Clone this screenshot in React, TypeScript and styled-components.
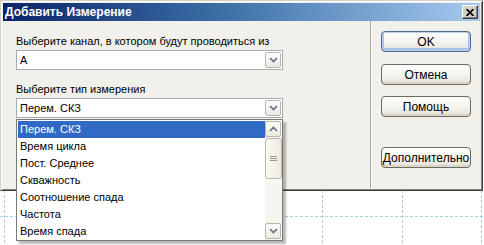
import styled, { createGlobalStyle } from 'styled-components';

const GlobalStyle = createGlobalStyle`
  body {
    margin: 0;
    background: #ffffff;
    font-family: Tahoma, 'Liberation Sans', 'DejaVu Sans', sans-serif;
  }
`;

const ui = {
  face: '#f2f0ea',
  frame: '#d4d0c8',
  field: '#a3abb6',
  select: '#316ac5',
  grid: '#a9cfdc',
};

const Stage = styled.div`
  position: relative;
  width: 484px;
  height: 245px;
  overflow: hidden;
  background: #ffffff;
`;

const Backdrop = styled.svg`
  position: absolute;
  inset: 0;
`;

const Window = styled.div`
  position: relative;
  width: 483px;
  height: 191px;
  box-sizing: border-box;
  display: flex;
  flex-direction: column;
  background: ${ui.face};
  border: 1px solid;
  border-color: ${ui.frame} #404040 #404040 ${ui.frame};
  box-shadow: inset 1px 1px 0 #ffffff, inset -1px -1px 0 #808080;
  padding: 2px;
`;

const TitleBar = styled.div`
  height: 18px;
  display: flex;
  align-items: center;
  padding: 0 2px 0 2px;
  background: linear-gradient(to right, #0a246a 0%, #3a6ea5 45%, #a6caf0 100%);
  color: #ffffff;
  font-size: 12px;
  font-weight: bold;
  font-family: Tahoma, 'Liberation Sans', sans-serif;
`;

const Title = styled.span`
  flex: 1;
`;

const CloseButton = styled.div`
  width: 16px;
  height: 14px;
  box-sizing: border-box;
  display: flex;
  align-items: center;
  justify-content: center;
  background: ${ui.frame};
  border: 1px solid;
  border-color: #ffffff #404040 #404040 #ffffff;
  box-shadow: inset -1px -1px 0 #808080;
`;

const Body = styled.div`
  flex: 1;
  display: flex;
`;

const LeftPane = styled.div`
  width: 367px;
  box-sizing: border-box;
  padding: 14px 0 0 13px;
  display: flex;
  flex-direction: column;
`;

const Divider = styled.div`
  width: 0;
  border-left: 1px solid #aca899;
  border-right: 1px solid #ffffff;
`;

const RightPane = styled.div`
  flex: 1;
  display: flex;
  flex-direction: column;
  align-items: center;
  padding-top: 10px;
`;

const Label = styled.div<{ $gap?: number }>`
  margin-top: ${(p) => p.$gap ?? 0}px;
  height: 13px;
  line-height: 13px;
  font-size: 11px;
  color: #000000;
  margin-bottom: 2px;
  white-space: nowrap;
`;

const Combo = styled.div`
  position: relative;
  width: 267px;
  height: 20px;
  box-sizing: border-box;
  border: 1px solid ${ui.field};
  background: #ffffff;
  display: flex;
  align-items: center;
  padding: 0 1px 0 3px;
  font-size: 11px;
`;

const ComboText = styled.span`
  flex: 1;
`;

const ArrowButton = styled.div<{ $h?: number }>`
  width: 16px;
  height: ${(p) => p.$h ?? 16}px;
  box-sizing: border-box;
  display: flex;
  align-items: center;
  justify-content: center;
  border: 1px solid #b9b6ab;
  border-radius: 2px;
  background: linear-gradient(to bottom, #fdfdfb, #ebe8de);
`;

const Popup = styled.div`
  position: absolute;
  left: -1px;
  top: 20px;
  width: 267px;
  box-sizing: border-box;
  border: 1px solid #7a7a7a;
  background: #ffffff;
  display: flex;
  box-shadow: 3px 3px 2px rgba(0, 0, 0, 0.28);
  z-index: 2;
`;

const Items = styled.div`
  flex: 1;
  display: flex;
  flex-direction: column;
  padding: 1px 0 0 1px;
`;

const Item = styled.div<{ $active?: boolean }>`
  height: 17px;
  line-height: 17px;
  padding-left: 2px;
  font-size: 11px;
  background: ${(p) => (p.$active ? ui.select : 'transparent')};
  color: ${(p) => (p.$active ? '#ffffff' : '#000000')};
`;

const ScrollBar = styled.div`
  width: 17px;
  display: flex;
  flex-direction: column;
  background: #f6f5f0;
  padding: 1px 0;
`;

const Track = styled.div`
  flex: 1;
  display: flex;
  flex-direction: column;
`;

const Thumb = styled.div`
  height: 41px;
  margin: 1px 0;
  box-sizing: border-box;
  border: 1px solid #b9b6ab;
  border-radius: 3px;
  background: linear-gradient(to right, #fbfaf6, #ece9df);
  display: flex;
  align-items: center;
  justify-content: center;
`;

const Button = styled.div<{ $primary?: boolean; $gap?: number }>`
  width: 90px;
  height: 21px;
  box-sizing: border-box;
  margin-top: ${(p) => p.$gap ?? 0}px;
  display: flex;
  align-items: center;
  justify-content: center;
  font-size: 12px;
  color: #000000;
  border: 1px solid ${(p) => (p.$primary ? '#4d6a93' : '#6d6a60')};
  border-radius: 4px;
  background: linear-gradient(to bottom, #ffffff 0%, #f4f3ee 55%, #e4e1d6 100%);
  box-shadow: ${(p) =>
    p.$primary ? 'inset 0 0 0 1px #bcd0ec, inset 0 -1px 0 2px #a9c1e6' : 'inset 0 -2px 0 #d8d4c6'};
`;

const Chevron = ({ up }: { up?: boolean }) => (
  <svg width="9" height="6" viewBox="0 0 9 6">
    <path
      d={up ? 'M1 5 L4.5 1.5 L8 5' : 'M1 1 L4.5 4.5 L8 1'}
      fill="none"
      stroke="#5d6d8a"
      strokeWidth="1.6"
    />
  </svg>
);

const Grip = () => (
  <svg width="7" height="6" viewBox="0 0 7 6">
    <path d="M0 0.5 H7 M0 2.5 H7 M0 4.5 H7" stroke="#9a978c" strokeWidth="1" />
  </svg>
);

const CloseIcon = () => (
  <svg width="8" height="7" viewBox="0 0 8 7">
    <path d="M0.5 0 L7.5 7 M7.5 0 L0.5 7" stroke="#000000" strokeWidth="1.7" />
  </svg>
);

const items = [
  'Перем. СКЗ',
  'Время цикла',
  'Пост. Среднее',
  'Скважность',
  'Соотношение спада',
  'Частота',
  'Время спада',
];

const App: React.FC = () => {
  return (
    <Stage>
      <GlobalStyle />
      <Backdrop width="484" height="245">
        <g stroke={ui.grid} strokeWidth="1" strokeDasharray="3 2">
          <line x1="4.5" y1="0" x2="4.5" y2="245" />
          <line x1="322.5" y1="0" x2="322.5" y2="245" />
          <line x1="402.5" y1="0" x2="402.5" y2="245" />
          <line x1="481.5" y1="0" x2="481.5" y2="245" />
          <line x1="0" y1="216.5" x2="484" y2="216.5" />
        </g>
      </Backdrop>
      <Window>
        <TitleBar>
          <Title>Добавить Измерение</Title>
          <CloseButton>
            <CloseIcon />
          </CloseButton>
        </TitleBar>
        <Body>
          <LeftPane>
            <Label>Выберите канал, в котором будут проводиться из</Label>
            <Combo>
              <ComboText>A</ComboText>
              <ArrowButton>
                <Chevron />
              </ArrowButton>
            </Combo>
            <Label $gap={13}>Выберите тип измерения</Label>
            <Combo>
              <ComboText>Перем. СКЗ</ComboText>
              <ArrowButton>
                <Chevron />
              </ArrowButton>
              <Popup>
                <Items>
                  {items.map((item, i) => (
                    <Item key={item} $active={i === 0}>
                      {item}
                    </Item>
                  ))}
                </Items>
                <ScrollBar>
                  <ArrowButton $h={16}>
                    <Chevron up />
                  </ArrowButton>
                  <Track>
                    <Thumb>
                      <Grip />
                    </Thumb>
                  </Track>
                  <ArrowButton $h={16}>
                    <Chevron />
                  </ArrowButton>
                </ScrollBar>
              </Popup>
            </Combo>
          </LeftPane>
          <Divider />
          <RightPane>
            <Button $primary>OK</Button>
            <Button $gap={12}>Отмена</Button>
            <Button $gap={11}>Помощь</Button>
            <Button $gap={30}>Дополнительно</Button>
          </RightPane>
        </Body>
      </Window>
    </Stage>
  );
};

export default App;
